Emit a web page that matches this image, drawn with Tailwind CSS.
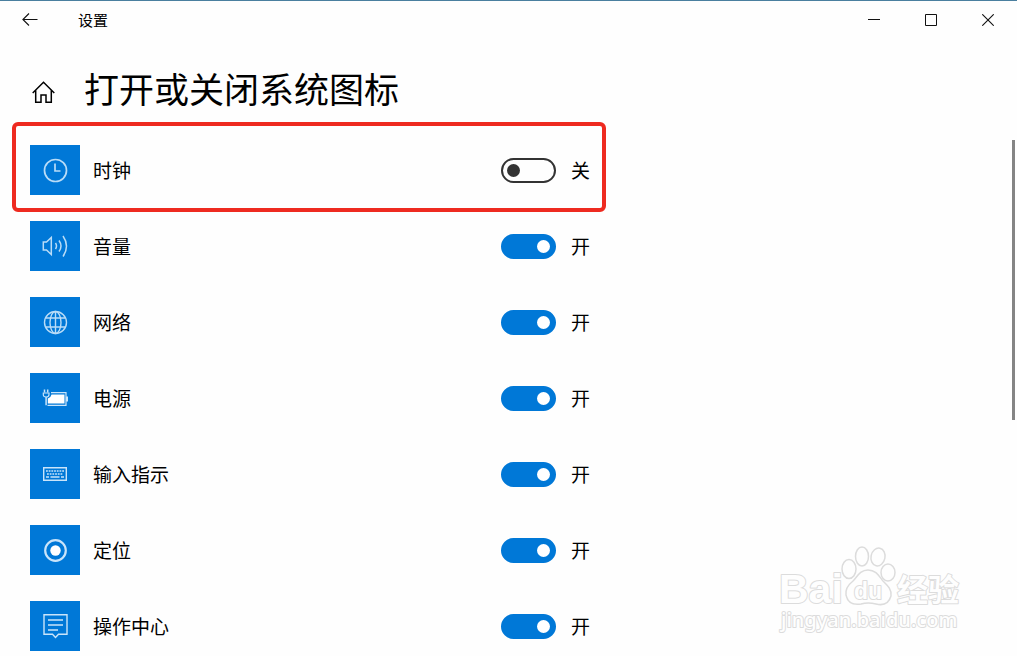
<!DOCTYPE html>
<html lang="zh-CN">
<head>
<meta charset="utf-8">
<meta name="viewport" content="width=device-width, initial-scale=1">
<title>设置</title>
<script src="https://cdn.jsdelivr.net/npm/@tailwindcss/browser@4"></script>
</head>
<body class="flex h-screen flex-col overflow-hidden border-t-1 border-[#4a7f9f] bg-[#fefefe] font-['Noto_Sans_CJK_SC',sans-serif] text-black">
  <header class="flex h-[38px] shrink-0 items-center justify-between">
    <div class="flex items-center">
      <button type="button" aria-label="返回" class="flex h-[38px] w-[59px] items-center justify-center">
        <svg class="h-4 w-4" viewBox="0 0 16 16" fill="none" stroke="#111" stroke-width="1.1"><path d="M7 1.5.9 7.5 7 13.5M1 7.500H15.500"/></svg>
      </button>
      <span class="ml-[19px] text-[15px] leading-6">设置</span>
    </div>
    <div class="flex pr-px">
      <button type="button" aria-label="最小化" class="flex h-[38px] w-[57px] items-center justify-center">
        <svg class="h-3 w-3" viewBox="0 0 12 12" fill="none" stroke="#111"><path d="M0 5.500H12"/></svg>
      </button>
      <button type="button" aria-label="最大化" class="flex h-[38px] w-[57px] items-center justify-center">
        <svg class="h-3 w-3" viewBox="0 0 12 12" fill="none" stroke="#111"><path d="M.5.5H11.500V11.500H.5Z"/></svg>
      </button>
      <button type="button" aria-label="关闭" class="flex h-[38px] w-[57px] items-center justify-center">
        <svg class="h-3 w-3" viewBox="0 0 12 12" fill="none" stroke="#111" stroke-width="1.1"><path d="M.3.3 11.700 11.700M11.700.3.3 11.700"/></svg>
      </button>
    </div>
  </header>

  <div class="flex h-[101px] shrink-0 items-end pl-8">
    <a href="#" aria-label="主页" class="mb-9 block">
      <svg class="h-6 w-6" viewBox="0 0 24 24" fill="none" stroke="#000" stroke-width="1.5"><path d="M.7 13 11.500 2.300 22.300 13M3.700 10.500V22.300H9V15H14V22.300H19.300V10.500"/></svg>
    </a>
    <h1 class="mb-7 ml-7 text-[35px] leading-12">打开或关闭系统图标</h1>
  </div>

  <main class="relative min-h-0 grow">
    <ul class="flex max-w-[591px] flex-col gap-[26px] pt-[5px] pl-[30px]">
      <li class="relative flex h-[50px] items-center">
        <span class="flex h-[50px] w-[50px] items-center justify-center bg-[#0078d7]">
          <svg class="h-7 w-7" viewBox="0 0 28 28" fill="none" stroke="#b9dcf7" stroke-width="1.7"><circle cx="14.500" cy="14.500" r="11"/><path d="M14 7.500V15H19.500"/></svg>
        </span>
        <label for="clock" class="ml-[13px] grow text-[19px] leading-7">时钟</label>
        <input id="clock" type="checkbox" role="switch" class="mr-[15px] flex h-[25px] w-[55px] appearance-none items-center rounded-full border-2 border-[#333] px-1 before:h-[13px] before:w-[13px] before:rounded-full before:bg-[#333] checked:justify-end checked:border-[#0078d7] checked:bg-[#0078d7] checked:before:bg-white">
        <span class="w-5 text-[19px] leading-7">关</span>
        <span class="pointer-events-none absolute -top-[23px] -right-[15px] -bottom-[17px] -left-[18px] rounded-md border-4 border-[#ee2a20]"></span>
      </li>
      <li class="flex h-[50px] items-center">
        <span class="flex h-[50px] w-[50px] items-center justify-center bg-[#0078d7]">
          <svg class="h-7 w-7" viewBox="0 0 28 28" fill="none" stroke="#b9dcf7" stroke-width="1.500"><path d="M2.300 10H5.500L10.300 5.500V22.500L5.500 18H2.300Z"/><path d="M14.500 11Q16.500 14 14.500 17M18 8.500Q22 14 18 19.500M22 4Q29 14 22 24.500"/></svg>
        </span>
        <label for="volume" class="ml-[13px] grow text-[19px] leading-7">音量</label>
        <input id="volume" type="checkbox" role="switch" checked class="mr-[15px] flex h-[25px] w-[55px] appearance-none items-center rounded-full border-2 border-[#333] px-1 before:h-[13px] before:w-[13px] before:rounded-full before:bg-[#333] checked:justify-end checked:border-[#0078d7] checked:bg-[#0078d7] checked:before:bg-white">
        <span class="w-5 text-[19px] leading-7">开</span>
      </li>
      <li class="flex h-[50px] items-center">
        <span class="flex h-[50px] w-[50px] items-center justify-center bg-[#0078d7]">
          <svg class="h-7 w-7" viewBox="0 0 28 28" fill="none" stroke="#b9dcf7" stroke-width="1.400"><circle cx="14.500" cy="14.500" r="11"/><ellipse cx="14.500" cy="14.500" rx="5.500" ry="11"/><path d="M14.500 3.500V25.500M5 10H24M5 19H24"/></svg>
        </span>
        <label for="network" class="ml-[13px] grow text-[19px] leading-7">网络</label>
        <input id="network" type="checkbox" role="switch" checked class="mr-[15px] flex h-[25px] w-[55px] appearance-none items-center rounded-full border-2 border-[#333] px-1 before:h-[13px] before:w-[13px] before:rounded-full before:bg-[#333] checked:justify-end checked:border-[#0078d7] checked:bg-[#0078d7] checked:before:bg-white">
        <span class="w-5 text-[19px] leading-7">开</span>
      </li>
      <li class="flex h-[50px] items-center">
        <span class="flex h-[50px] w-[50px] items-center justify-center bg-[#0078d7]">
          <svg class="h-7 w-7" viewBox="0 0 28 28" fill="none" stroke="#c9e4fa" stroke-width="1.200"><path d="M10 8.700H25V21.300H6.500"/><path d="M10.500 10.500H23.500V19.500H6.800V14.500Q10 13.500 10.500 10.500Z" fill="#fff" stroke="none"/><path d="M26 12.500V17.500" stroke-width="2"/><path d="M3.500 5.500V8.500M6.700 5.500V8.500M5.100 13V21.300" stroke-width="1.500"/><path d="M2.300 9H8V10.500Q8 13 5.100 13T2.300 10.500Z"/></svg>
        </span>
        <label for="power" class="ml-[13px] grow text-[19px] leading-7">电源</label>
        <input id="power" type="checkbox" role="switch" checked class="mr-[15px] flex h-[25px] w-[55px] appearance-none items-center rounded-full border-2 border-[#333] px-1 before:h-[13px] before:w-[13px] before:rounded-full before:bg-[#333] checked:justify-end checked:border-[#0078d7] checked:bg-[#0078d7] checked:before:bg-white">
        <span class="w-5 text-[19px] leading-7">开</span>
      </li>
      <li class="flex h-[50px] items-center">
        <span class="flex h-[50px] w-[50px] items-center justify-center bg-[#0078d7]">
          <svg class="h-7 w-7" viewBox="0 0 28 28" fill="none" stroke="#c9e4fa" stroke-width="1.400"><path d="M2.700 7.700H25.300V20.300H2.700Z"/><path d="M5 11H23M6 14H22" stroke-dasharray="1.800 .9"/><path d="M5 17H8M9.500 17H18.500M20 17H23"/></svg>
        </span>
        <label for="input" class="ml-[13px] grow text-[19px] leading-7">输入指示</label>
        <input id="input" type="checkbox" role="switch" checked class="mr-[15px] flex h-[25px] w-[55px] appearance-none items-center rounded-full border-2 border-[#333] px-1 before:h-[13px] before:w-[13px] before:rounded-full before:bg-[#333] checked:justify-end checked:border-[#0078d7] checked:bg-[#0078d7] checked:before:bg-white">
        <span class="w-5 text-[19px] leading-7">开</span>
      </li>
      <li class="flex h-[50px] items-center">
        <span class="flex h-[50px] w-[50px] items-center justify-center bg-[#0078d7]">
          <svg class="h-7 w-7" viewBox="0 0 28 28" fill="none"><circle cx="14.500" cy="14.500" r="10.300" stroke="#c9e4fa" stroke-width="2.200"/><circle cx="14.500" cy="14.500" r="5.200" fill="#fff"/></svg>
        </span>
        <label for="location" class="ml-[13px] grow text-[19px] leading-7">定位</label>
        <input id="location" type="checkbox" role="switch" checked class="mr-[15px] flex h-[25px] w-[55px] appearance-none items-center rounded-full border-2 border-[#333] px-1 before:h-[13px] before:w-[13px] before:rounded-full before:bg-[#333] checked:justify-end checked:border-[#0078d7] checked:bg-[#0078d7] checked:before:bg-white">
        <span class="w-5 text-[19px] leading-7">开</span>
      </li>
      <li class="flex h-[50px] items-center">
        <span class="flex h-[50px] w-[50px] items-center justify-center bg-[#0078d7]">
          <svg class="h-7 w-7" viewBox="0 0 28 28" fill="none" stroke="#c9e4fa" stroke-width="1.400"><path d="M3 2.700H26V22.300H17.500L14.500 25.500 11.500 22.300H3Z"/><path d="M7 8H22M7 13H22M7 18H17"/></svg>
        </span>
        <label for="action" class="ml-[13px] grow text-[19px] leading-7">操作中心</label>
        <input id="action" type="checkbox" role="switch" checked class="mr-[15px] flex h-[25px] w-[55px] appearance-none items-center rounded-full border-2 border-[#333] px-1 before:h-[13px] before:w-[13px] before:rounded-full before:bg-[#333] checked:justify-end checked:border-[#0078d7] checked:bg-[#0078d7] checked:before:bg-white">
        <span class="w-5 text-[19px] leading-7">开</span>
      </li>
    </ul>
    <div class="absolute top-0 right-[2px] h-[280px] w-[3px] bg-[#858585]"></div>
    <svg class="pointer-events-none absolute right-[47px] bottom-[11px] h-[110px] w-[200px]" viewBox="0 0 200 110" fill="#fefefe" stroke="#dcdcdc" stroke-width="1.500" stroke-linejoin="round">
      <g paint-order="stroke" stroke-width="2">
        <text x="9" y="68" font-family="Liberation Sans" font-weight="700" font-size="41">Bai</text>
        <text x="127" y="66" font-family="Noto Sans CJK SC" font-weight="700" font-size="31">经验</text>
        <text x="11" y="92" font-family="Noto Sans" font-weight="500" font-size="20">jingyan.baidu.com</text>
      </g>
      <ellipse cx="79" cy="34" rx="7" ry="9.500"/>
      <ellipse cx="92" cy="21.500" rx="6.500" ry="9.500"/>
      <ellipse cx="108" cy="22" rx="7" ry="9" transform="rotate(12 108 22)"/>
      <ellipse cx="118" cy="37.500" rx="7" ry="8.500"/>
      <path d="M98 35C90 35 87 42 83 46C78 50 75 54 76 60C78 69 84 70 91 69Q98 67 106 69C114 71 119 68 121 61C122 54 117 50 113 46C109 41 106 35 98 35Z"/>
      <text x="84" y="64" font-family="Liberation Sans" font-weight="700" font-size="23" paint-order="stroke" stroke-width="2">du</text>
    </svg>
  </main>
</body>
</html>
